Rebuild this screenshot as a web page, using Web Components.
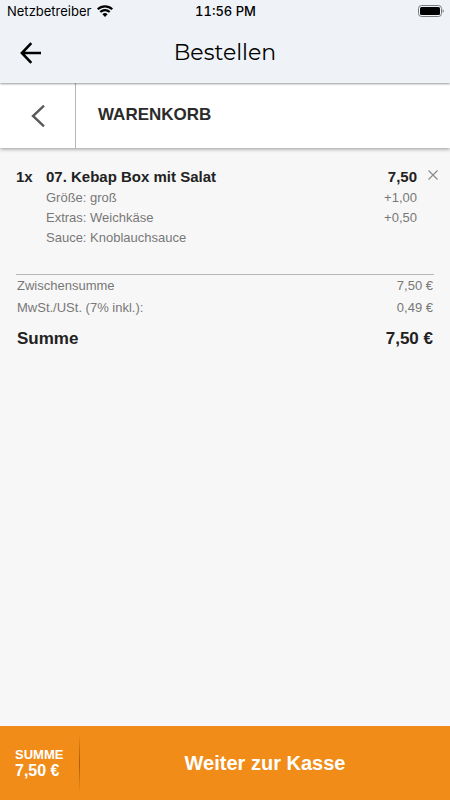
<!DOCTYPE html>
<html lang="de">
<head>
<meta charset="utf-8">
<meta name="viewport" content="width=device-width, initial-scale=1">
<title>Bestellen</title>
<style>
  html, body { margin: 0; }
  body { background: #f7f7f7; font-family: "Liberation Sans", Arial, sans-serif; color: #262626; }
</style>
</head>
<body>
<order-screen>
  <status-bar slot="top" carrier="Netzbetreiber" time="11:56 PM"></status-bar>
  <app-header slot="top">Bestellen</app-header>
  <section-bar slot="top">WARENKORB</section-bar>
  <cart-item count="1x" name="07. Kebap Box mit Salat" price="7,50">
    <cart-option price="+1,00">Größe: groß</cart-option>
    <cart-option price="+0,50">Extras: Weichkäse</cart-option>
    <cart-option>Sauce: Knoblauchsauce</cart-option>
  </cart-item>
  <cart-totals>
    <total-row amount="7,50 €">Zwischensumme</total-row>
    <total-row amount="0,49 €">MwSt./USt. (7% inkl.):</total-row>
    <total-row grand amount="7,50 €">Summe</total-row>
  </cart-totals>
  <checkout-bar slot="bottom" amount="7,50 €">Weiter zur Kasse</checkout-bar>
</order-screen>
<script>
  const define = (name, html, attrs = []) => {
    const template = document.createElement('template');
    template.innerHTML = '<style>* { box-sizing: border-box; } button { border: 0; padding: 0; margin: 0; background: none; color: inherit; font: inherit; cursor: pointer; } svg { display: block; }</style>' + html;
    customElements.define(name, class extends HTMLElement {
      constructor() {
        super();
        this.attachShadow({ mode: 'open' }).append(template.content.cloneNode(true));
      }
      connectedCallback() {
        for (const a of attrs) {
          const target = this.shadowRoot.querySelector('[data-' + a + ']');
          target.textContent = this.getAttribute(a) || '';
        }
      }
    });
  };

  define('order-screen', `
    <style>
      :host { display: flex; flex-direction: column; min-height: 100vh; }
      main { flex: 1; padding: 19px 16px 16px; }
    </style>
    <slot name="top"></slot>
    <main><slot></slot></main>
    <slot name="bottom"></slot>`);

  define('status-bar', `
    <style>
      :host { display: grid; grid-template-columns: 1fr auto 1fr; align-items: center; height: 22px; padding: 0 6px 0 7px; background: #eff3f8; color: #000; font: 13px/22px Inter, sans-serif; }
      .carrier { display: flex; align-items: center; gap: 6px; }
      .time { font-weight: 500; font-variant-numeric: tabular-nums; }
      .battery { justify-self: end; }
    </style>
    <span class="carrier"><span data-carrier></span>
      <svg width="16" height="12" viewBox="0 0 16 12" aria-hidden="true"><g fill="none" stroke="#000" stroke-width="2.2"><path d="M.7 4.3a10.4 10.4 0 0 1 14.6 0"/><path d="M3.3 7a6.7 6.7 0 0 1 9.4 0"/></g><path d="M8 12 5.4 9.3a3.8 3.8 0 0 1 5.2 0z"/></svg>
    </span>
    <span class="time" data-time></span>
    <svg class="battery" width="26" height="12" viewBox="0 0 26 12" aria-hidden="true"><rect x=".5" y=".5" width="23" height="11" rx="3" fill="none" stroke="#777a7e"/><rect x="2" y="2" width="20" height="8" rx="1.5"/><path d="M24.6 4.2q1.3.5 1.3 1.8t-1.3 1.8z" fill="#777a7e"/></svg>`, ['carrier', 'time']);

  define('app-header', `
    <style>
      :host { display: grid; grid-template-columns: 61px 1fr 61px; align-items: center; background: #eff3f8; box-shadow: 0 1px 2px #0006; clip-path: inset(0 0 -4px); position: relative; z-index: 1; color: #000; }
      button { display: grid; place-items: center; height: 60px; }
      h1 { margin: 0; text-align: center; padding-top: 1px; font: 400 22px/60px Montserrat, Inter, sans-serif; }
    </style>
    <button aria-label="Zurück"><svg width="21" height="22" viewBox="0 0 21 22" fill="none" stroke="#000" stroke-width="2.6"><path d="M11.3 1.2 1.9 11l9.4 9.8M2 11h19"/></svg></button>
    <h1><slot></slot></h1>`);

  define('section-bar', `
    <style>
      :host { display: flex; height: 65px; background: #fff; box-shadow: 0 1px 4px #0006; }
      button { width: 76px; display: grid; place-items: center; border-right: 1px solid #b5b5b5; }
      h2 { margin: 0; padding-left: 22px; font-size: 17px; line-height: 64px; color: #2b2b2b; }
    </style>
    <button aria-label="Zurück zur Karte"><svg width="14" height="22" viewBox="0 0 14 22" fill="none" stroke="#595959" stroke-width="2.4"><path d="M13 .7 2 11l11 10.3"/></svg></button>
    <h2><slot></slot></h2>`);

  define('cart-item', `
    <style>
      :host { display: block; }
      .head { display: flex; align-items: center; height: 20px; margin-right: -4px; font-size: 15px; line-height: 20px; font-weight: 700; color: #222; }
      .count { width: 30px; }
      .name { flex: 1; }
      button { width: 21px; height: 20px; display: grid; place-items: center end; }
      .options { padding: 1px 17px 0 30px; }
    </style>
    <div class="head"><span class="count" data-count></span><span class="name" data-name></span><span data-price></span>
      <button aria-label="Entfernen"><svg width="10" height="16" viewBox="0 0 10 16" stroke="#888" stroke-width="1.1"><path d="m.5 1.5 9 9m0-9-9 9"/></svg></button>
    </div>
    <div class="options"><slot></slot></div>`, ['count', 'name', 'price']);

  define('cart-option', `
    <style>:host { display: flex; justify-content: space-between; font-size: 13px; line-height: 20px; color: #777; }</style>
    <span><slot></slot></span><span data-price></span>`, ['price']);

  define('cart-totals', `
    <style>:host { display: block; margin-top: 26px; border-top: 1px solid #b5b5b5; padding: 0 1px; }</style>
    <slot></slot>`);

  define('total-row', `
    <style>
      :host { display: flex; justify-content: space-between; font-size: 13px; line-height: 22px; color: #777; }
      :host([grand]) { margin-top: 6px; font-size: 17px; line-height: 28px; font-weight: 700; color: #222; }
    </style>
    <span><slot></slot></span><span data-amount></span>`, ['amount']);

  define('checkout-bar', `
    <style>
      :host { display: block; }
      button { display: flex; align-items: center; width: 100%; height: 74px; background: #f08c17; color: #fff; font-weight: 700; text-align: left; }
      .sum { width: 80px; padding-left: 15px; font-size: 13px; line-height: 16px; }
      .sum b { display: block; font-size: 16px; }
      .rule { width: 1px; height: 60px; margin-left: -1px; background: linear-gradient(#a85d0000, #a85d00, #a85d0000); }
      .label { flex: 1; text-align: center; font-size: 20px; }
    </style>
    <button><span class="sum">SUMME<b data-amount></b></span><span class="rule"></span><span class="label"><slot></slot></span></button>`, ['amount']);
</script>
</body>
</html>
